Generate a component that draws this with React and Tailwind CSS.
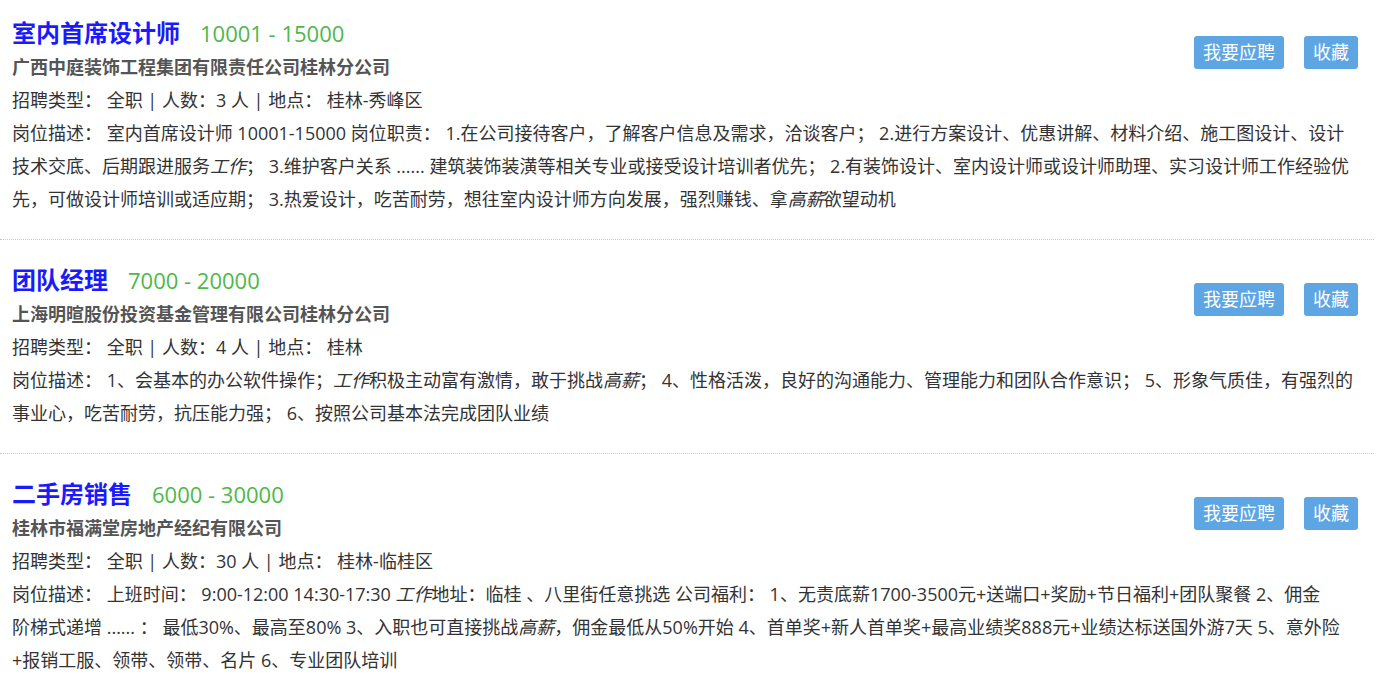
const jobs = [
  {
    title: "室内首席设计师",
    salary: "10001 - 15000",
    company: "广西中庭装饰工程集团有限责任公司桂林分公司",
    count: "3",
    place: "桂林-秀峰区",
    desc: (
      <>
        室内首席设计师 10001-15000 岗位职责： 1.在公司接待客户，了解客户信息及需求，洽谈客户； 2.进行方案设计、优惠讲解、材料介绍、施工图设计、设计技术交底、后期跟进服务<em>工作</em>； 3.维护客户关系 ...... 建筑装饰装潢等相关专业或接受设计培训者优先； 2.有装饰设计、室内设计师或设计师助理、实习设计师工作经验优先，可做设计师培训或适应期； 3.热爱设计，吃苦耐劳，想往室内设计师方向发展，强烈赚钱、拿<em>高薪</em>欲望动机
      </>
    ),
  },
  {
    title: "团队经理",
    salary: "7000 - 20000",
    company: "上海明暄股份投资基金管理有限公司桂林分公司",
    count: "4",
    place: "桂林",
    desc: (
      <>
        1、会基本的办公软件操作；<em>工作</em>积极主动富有激情，敢于挑战<em>高薪</em>； 4、性格活泼，良好的沟通能力、管理能力和团队合作意识； 5、形象气质佳，有强烈的事业心，吃苦耐劳，抗压能力强； 6、按照公司基本法完成团队业绩
      </>
    ),
  },
  {
    title: "二手房销售",
    salary: "6000 - 30000",
    company: "桂林市福满堂房地产经纪有限公司",
    count: "30",
    place: "桂林-临桂区",
    desc: (
      <>
        上班时间： 9:00-12:00 14:30-17:30 <em>工作</em>地址：临桂 、八里街任意挑选 公司福利： 1、无责底薪1700-3500元+送端口+奖励+节日福利+团队聚餐 2、佣金
        <br />
        阶梯式递增 ...... ： 最低30%、最高至80% 3、入职也可直接挑战<em>高薪</em>，佣金最低从50%开始 4、首单奖+新人首单奖+最高业绩奖888元+业绩达标送国外游7天 5、意外险+报销工服、领带、领带、名片 6、专业团队培训
      </>
    ),
  },
];

export default function App() {
  return (
    <div className="min-h-screen bg-white font-['Open_Sans','Noto_Sans_CJK_SC',sans-serif] text-[#333]">
      <div className="w-[1374px]">
        {jobs.map((job, i) => (
          <div
            key={i}
            className={`border-b border-dotted border-[#c8c8c8] pl-3 pr-4 pb-[23px] ${i === 0 ? "pt-[15px]" : "pt-[22px]"}`}
          >
            <div className="flex items-start justify-between">
              <div>
                <div className="flex items-baseline h-9 leading-9">
                  <span className="text-2xl font-bold text-[#1a1aff]">{job.title}</span>
                  <span className="ml-5 text-[22px] text-[#4db848]">{job.salary}</span>
                </div>
                <div className="text-[18px] leading-[33px] font-bold text-[#555]">{job.company}</div>
                <div className="text-[18px] leading-[33px]">
                  招聘类型： 全职 | 人数：{job.count} 人 | 地点： {job.place}
                </div>
              </div>
              <div className="flex gap-5 mt-[21px]">
                <button className="h-[33px] px-[9px] rounded-[3px] bg-[#5da6e3] text-white text-[18px] leading-[33px]">
                  我要应聘
                </button>
                <button className="h-[33px] px-[9px] rounded-[3px] bg-[#5da6e3] text-white text-[18px] leading-[33px]">
                  收藏
                </button>
              </div>
            </div>
            <p className="text-[18px] leading-[33px]">
              岗位描述： {job.desc}
            </p>
          </div>
        ))}
      </div>
    </div>
  );
}
